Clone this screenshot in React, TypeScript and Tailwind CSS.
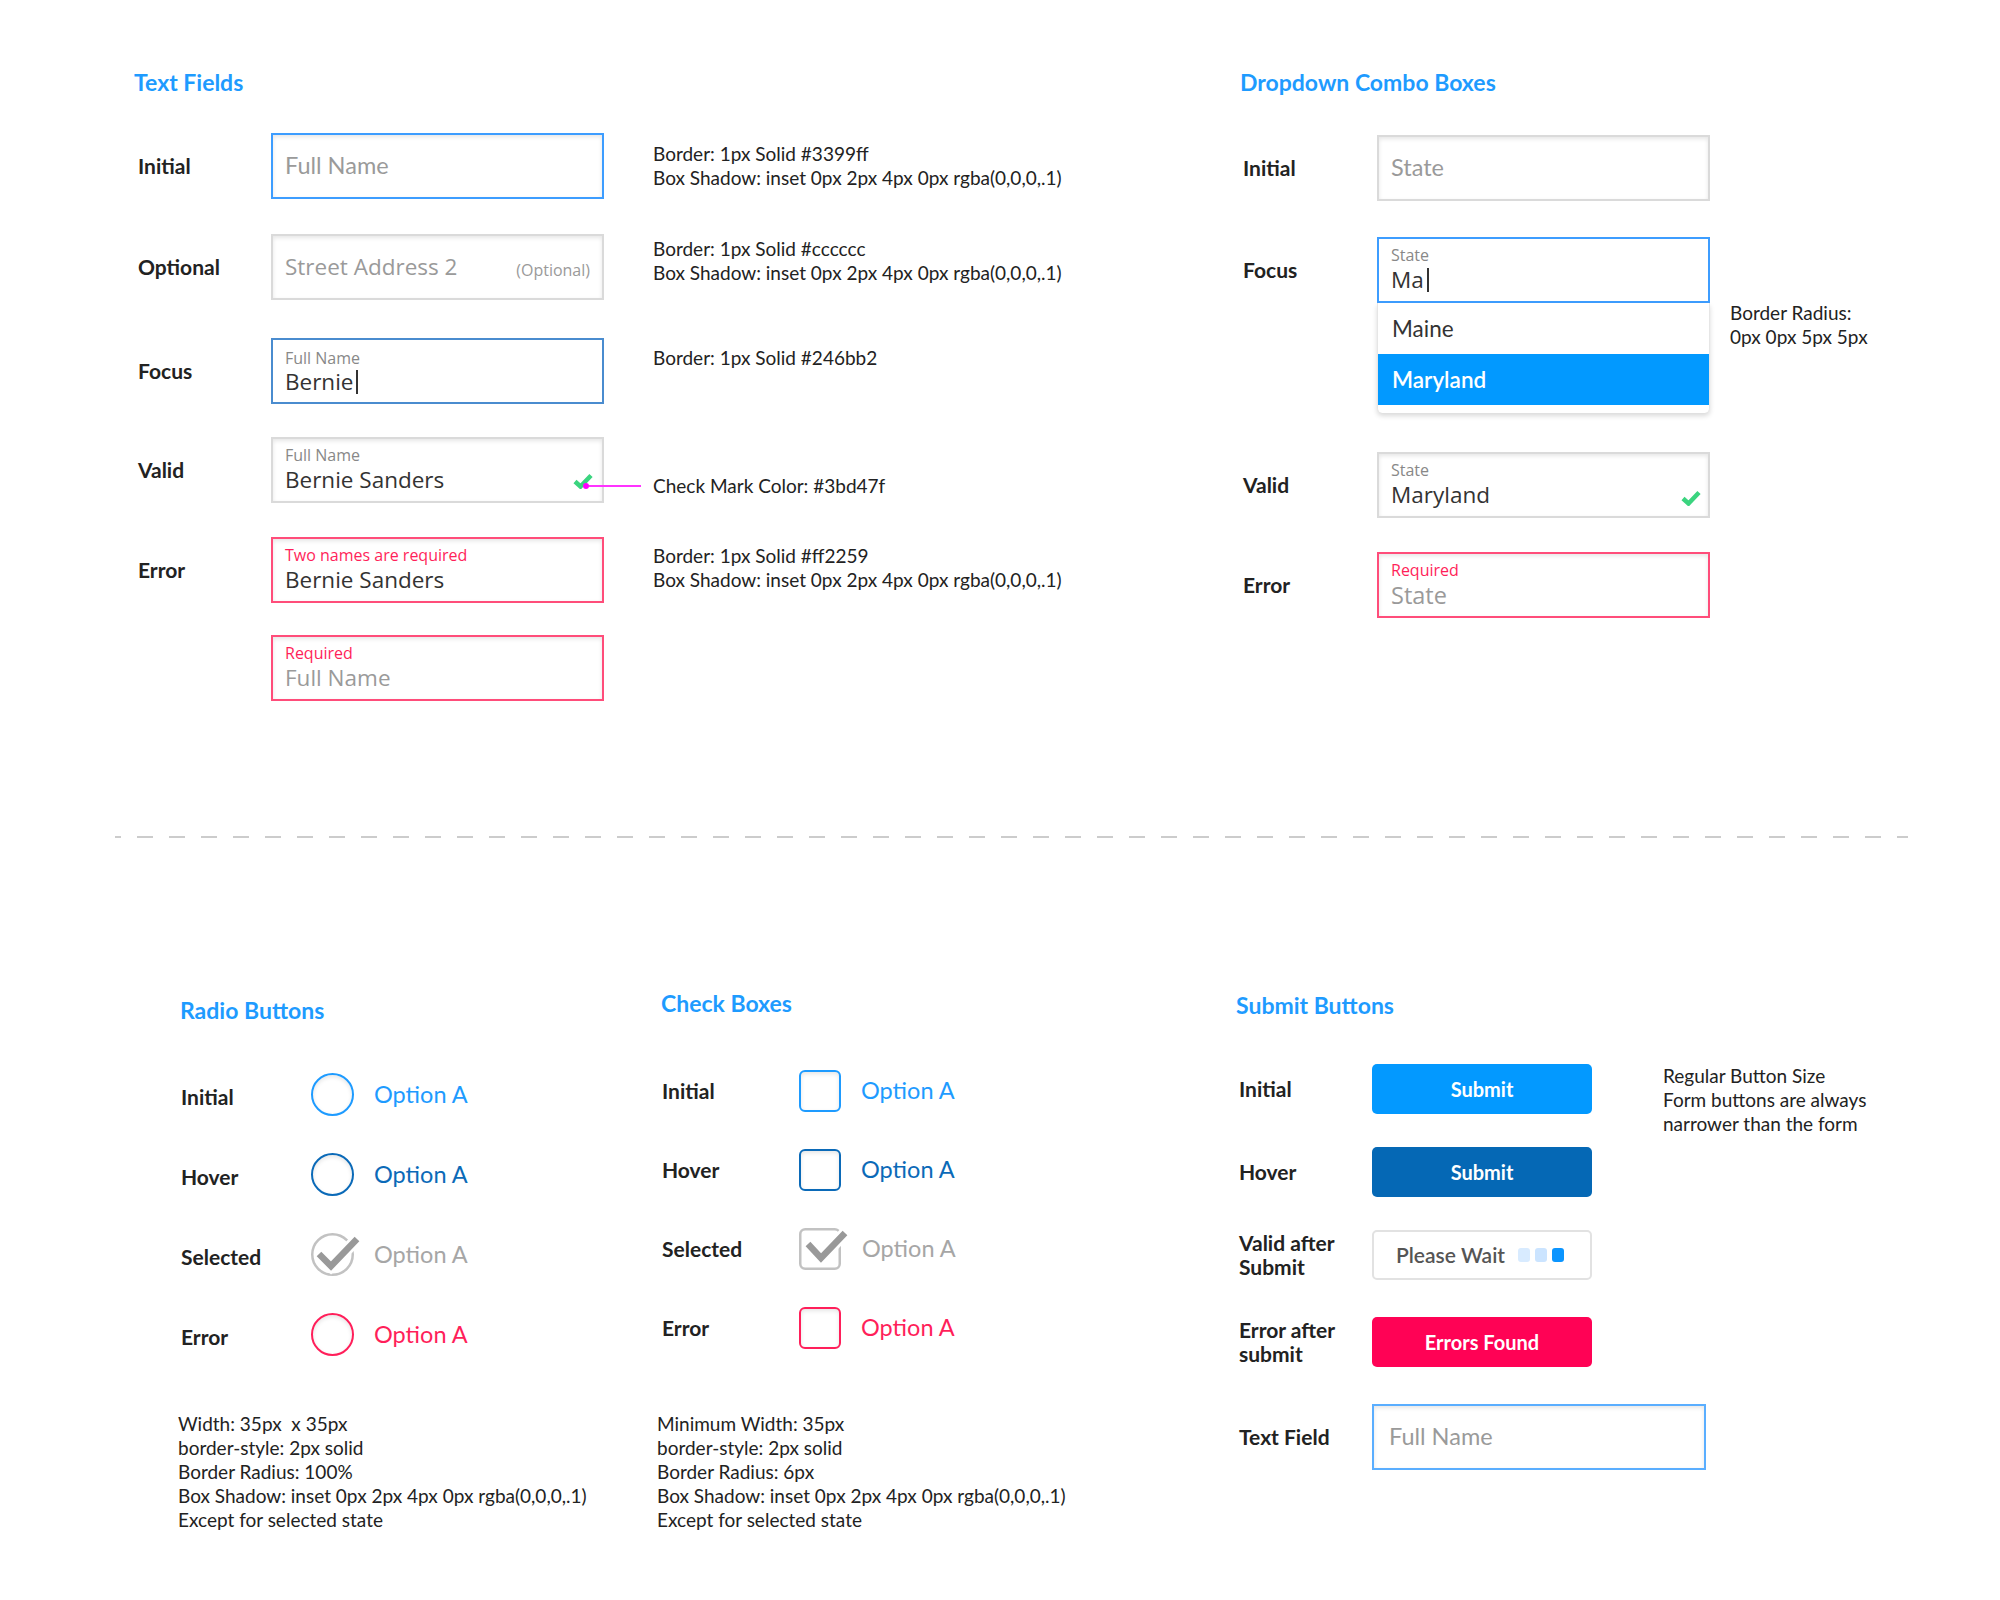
import React from 'react';

const SHADOW = 'shadow-[inset_0_2px_4px_rgba(0,0,0,0.1)]';

function GreenCheck({ className = '' }: { className?: string }) {
    return (
        <svg width="20" height="16" viewBox="0 0 20 16" className={className}>
            <path d="M2 8.5 L7.5 13.5 L18 2.5" fill="none" stroke="#3bd47f" strokeWidth="4.5" />
        </svg>
    );
}

function Cursor() {
    return <span className="ml-[3px] inline-block h-[24px] w-[2px] bg-[#333] align-[-4px]" />;
}

function RowLabel({ children, className = 'w-[137px] pl-[4px]' }: { children: React.ReactNode; className?: string }) {
    return <div className={`shrink-0 text-[21px] font-bold leading-[24px] text-[#222] ${className}`}>{children}</div>;
}

function Note({ children, className = '' }: { children: React.ReactNode; className?: string }) {
    return <div className={`text-[19px] leading-[24px] text-[#222] ${className}`}>{children}</div>;
}

function Heading({ children, className = '' }: { children: React.ReactNode; className?: string }) {
    return <h2 className={`text-[23px] font-bold leading-[30px] text-[#1e9bff] ${className}`}>{children}</h2>;
}

function Placeholder({ text }: { text: string }) {
    return <div className="flex h-full items-center pl-[12px] text-[23.5px] text-[#9a9a9a]">{text}</div>;
}

function TextFields() {
    return (
        <section className="w-[1106px] shrink-0">
            <Heading>Text Fields</Heading>

            {/* Initial */}
            <div className="mt-[36px] flex items-center">
                <RowLabel>Initial</RowLabel>
                <div className={`h-[66px] w-[333px] shrink-0 border-2 border-[#3d9dff] bg-white ${SHADOW}`}>
                    <Placeholder text="Full Name" />
                </div>
                <Note className="ml-[49px]">
                    Border: 1px Solid #3399ff
                    <br />
                    Box Shadow: inset 0px 2px 4px 0px rgba(0,0,0,.1)
                </Note>
            </div>

            {/* Optional */}
            <div className="mt-[35px] flex items-center">
                <RowLabel>Optional</RowLabel>
                <div className={`flex h-[66px] w-[333px] shrink-0 items-center justify-between border-2 border-[#dadada] bg-white pl-[12px] pr-[12px] ${SHADOW}`}>
                    <span className="text-[22.5px] text-[#9a9a9a]">Street Address 2</span>
                    <span className="mt-[6px] text-[16px] text-[#9a9a9a]">(Optional)</span>
                </div>
                <Note className="mb-[13px] ml-[49px]">
                    Border: 1px Solid #cccccc
                    <br />
                    Box Shadow: inset 0px 2px 4px 0px rgba(0,0,0,.1)
                </Note>
            </div>

            {/* Focus */}
            <div className="mt-[38px] flex items-center">
                <RowLabel>Focus</RowLabel>
                <div className="flex h-[66px] w-[333px] shrink-0 flex-col border-2 border-[#4a8ccf] bg-white pl-[12px] pt-[8px]">
                    <span className="text-[16px] leading-[20px] text-[#888]">Full Name</span>
                    <span className="text-[22.5px] leading-[28px] text-[#333]">
                        Bernie
                        <Cursor />
                    </span>
                </div>
                <Note className="mb-[26px] ml-[49px]">Border: 1px Solid #246bb2</Note>
            </div>

            {/* Valid */}
            <div className="mt-[33px] flex items-center">
                <RowLabel>Valid</RowLabel>
                <div className={`flex h-[66px] w-[333px] shrink-0 flex-col border-2 border-[#dadada] bg-white pl-[12px] pt-[6px] ${SHADOW}`}>
                    <span className="text-[16px] leading-[20px] text-[#888]">Full Name</span>
                    <div className="flex items-center justify-between pr-[9px]">
                        <span className="text-[22.5px] leading-[30px] text-[#333]">Bernie Sanders</span>
                        <GreenCheck className="mt-[2px]" />
                    </div>
                </div>
                <div className="relative -ml-[18px] mt-[32px] flex items-center">
                    <span className="-ml-[3px] h-[6px] w-[6px] rounded-full bg-[#ff00ff]" />
                    <span className="h-[2px] w-[52px] bg-[#ff33ff]" />
                    <Note className="ml-[12px]">Check Mark Color: #3bd47f</Note>
                </div>
            </div>

            {/* Error */}
            <div className="mt-[34px] flex items-center">
                <RowLabel>Error</RowLabel>
                <div className={`flex h-[66px] w-[333px] shrink-0 flex-col border-2 border-[#ff4d7a] bg-white pl-[12px] pt-[6px] ${SHADOW}`}>
                    <span className="text-[16px] leading-[20px] text-[#ff1f5a]">Two names are required</span>
                    <span className="text-[22.5px] leading-[30px] text-[#333]">Bernie Sanders</span>
                </div>
                <Note className="mb-[4px] ml-[49px]">
                    Border: 1px Solid #ff2259
                    <br />
                    Box Shadow: inset 0px 2px 4px 0px rgba(0,0,0,.1)
                </Note>
            </div>

            {/* Error, empty */}
            <div className="mt-[32px] flex items-center">
                <RowLabel> </RowLabel>
                <div className={`flex h-[66px] w-[333px] shrink-0 flex-col border-2 border-[#ff4d7a] bg-white pl-[12px] pt-[6px] ${SHADOW}`}>
                    <span className="text-[16px] leading-[20px] text-[#ff1f5a]">Required</span>
                    <span className="text-[22.5px] leading-[30px] text-[#9a9a9a]">Full Name</span>
                </div>
            </div>
        </section>
    );
}

function Dropdowns() {
    return (
        <section className="shrink-0">
            <Heading>Dropdown Combo Boxes</Heading>

            <div className="mt-[38px] flex items-center">
                <RowLabel className="w-[137px] pl-[3px]">Initial</RowLabel>
                <div className={`h-[66px] w-[333px] shrink-0 border-2 border-[#dadada] bg-white ${SHADOW}`}>
                    <Placeholder text="State" />
                </div>
            </div>

            <div className="mt-[36px] flex items-start">
                <div className="flex h-[66px] items-center">
                    <RowLabel className="w-[137px] pl-[3px]">Focus</RowLabel>
                </div>
                <div className="w-[333px] shrink-0">
                    <div className="flex h-[66px] flex-col border-2 border-[#3d9dff] bg-white pl-[12px] pt-[6px]">
                        <span className="text-[16px] leading-[20px] text-[#888]">State</span>
                        <span className="text-[22.5px] leading-[30px] text-[#333]">
                            Ma
                            <Cursor />
                        </span>
                    </div>
                    <div className="rounded-b-[5px] border-x border-[#e6e6e6] bg-white pb-[8px] shadow-[0_3px_5px_rgba(0,0,0,0.15)]">
                        <div className="flex h-[51px] items-center pl-[14px] text-[22.5px] text-[#333]">Maine</div>
                        <div className="flex h-[51px] items-center bg-[#0299ff] pl-[14px] text-[22.5px] font-semibold text-white">
                            Maryland
                        </div>
                    </div>
                </div>
                <Note className="ml-[20px] mt-[64px]">
                    Border Radius:
                    <br />
                    0px 0px 5px 5px
                </Note>
            </div>

            <div className="mt-[39px] flex items-center">
                <RowLabel className="w-[137px] pl-[3px]">Valid</RowLabel>
                <div className={`flex h-[66px] w-[333px] shrink-0 flex-col border-2 border-[#dadada] bg-white pl-[12px] pt-[6px] ${SHADOW}`}>
                    <span className="text-[16px] leading-[20px] text-[#888]">State</span>
                    <div className="flex items-center justify-between pr-[7px]">
                        <span className="text-[22.5px] leading-[30px] text-[#333]">Maryland</span>
                        <GreenCheck className="mt-[6px]" />
                    </div>
                </div>
            </div>

            <div className="mt-[34px] flex items-center">
                <RowLabel className="w-[137px] pl-[3px]">Error</RowLabel>
                <div className={`flex h-[66px] w-[333px] shrink-0 flex-col border-2 border-[#ff4d7a] bg-white pl-[12px] pt-[6px] ${SHADOW}`}>
                    <span className="text-[16px] leading-[20px] text-[#ff1f5a]">Required</span>
                    <span className="text-[23.5px] leading-[30px] text-[#9a9a9a]">State</span>
                </div>
            </div>
        </section>
    );
}

function SelectedCheck({ round }: { round: boolean }) {
    return (
        <svg width="43" height="43" viewBox="0 0 43 43" overflow="visible" className="shrink-0">
            {round ? (
                <circle cx="21.5" cy="21.5" r="20.25" fill="none" stroke="#c2c2c2" strokeWidth="2.5" />
            ) : (
                <rect x="1.25" y="1.25" width="39.5" height="39.5" rx="5" fill="none" stroke="#c2c2c2" strokeWidth="2.5" />
            )}
            <path
                d={round ? 'M8 21 L20 33 L46 6' : 'M9 16 L22 30 L46 5'}
                fill="none"
                stroke="#ffffff"
                strokeWidth="12"
            />
            <path
                d={round ? 'M8 21 L20 33 L46 6' : 'M9 16 L22 30 L46 5'}
                fill="none"
                stroke="#999999"
                strokeWidth="6.5"
            />
        </svg>
    );
}

const OPTION_ROWS = [
    { label: 'Initial', border: 'border-[#1e9bff]', text: 'text-[#1e9bff]' },
    { label: 'Hover', border: 'border-[#0b6ab8]', text: 'text-[#0b6ab8]' },
    { label: 'Selected', border: '', text: 'text-[#a6a6a6]' },
    { label: 'Error', border: 'border-[#ff1f5a]', text: 'text-[#ff1f5a]' },
];

function RadioButtons() {
    return (
        <section className="w-[479px] shrink-0 pt-[157px]">
            <Heading>Radio Buttons</Heading>
            <div className="mt-[48px] flex flex-col gap-[37px]">
                {OPTION_ROWS.map((row) => (
                    <div key={row.label} className="flex h-[43px] items-center">
                        <RowLabel className="mt-[4px] w-[131px] pl-[1px]">{row.label}</RowLabel>
                        {row.label === 'Selected' ? (
                            <SelectedCheck round />
                        ) : (
                            <div className={`h-[43px] w-[43px] shrink-0 rounded-full border-[2.5px] bg-white ${row.border} ${SHADOW}`} />
                        )}
                        <span className={`ml-[20px] text-[23.5px] ${row.text}`}>Option A</span>
                    </div>
                ))}
            </div>
            <Note className="-ml-[2px] mt-[56px]">
                Width: 35px&nbsp; x 35px
                <br />
                border-style: 2px solid
                <br />
                Border Radius: 100%
                <br />
                Box Shadow: inset 0px 2px 4px 0px rgba(0,0,0,.1)
                <br />
                Except for selected state
            </Note>
        </section>
    );
}

function CheckBoxes() {
    return (
        <section className="w-[577px] shrink-0 pt-[150px]">
            <Heading className="ml-[2px]">Check Boxes</Heading>
            <div className="mt-[52px] flex flex-col gap-[37px]">
                {OPTION_ROWS.map((row) => (
                    <div key={row.label} className="flex h-[42px] items-center">
                        <RowLabel className="w-[140px] pl-[3px]">{row.label}</RowLabel>
                        {row.label === 'Selected' ? (
                            <SelectedCheck round={false} />
                        ) : (
                            <div className={`h-[42px] w-[42px] shrink-0 rounded-[6px] border-[2.5px] bg-white ${row.border} ${SHADOW}`} />
                        )}
                        <span className={`ml-[20px] text-[23.5px] ${row.text}`}>Option A</span>
                    </div>
                ))}
            </div>
            <Note className="-ml-[2px] mt-[63px]">
                Minimum Width: 35px
                <br />
                border-style: 2px solid
                <br />
                Border Radius: 6px
                <br />
                Box Shadow: inset 0px 2px 4px 0px rgba(0,0,0,.1)
                <br />
                Except for selected state
            </Note>
        </section>
    );
}

function SubmitButtons() {
    const label = 'w-[136px] pl-[3px]';
    const button = 'flex h-[50px] w-[220px] shrink-0 items-center justify-center rounded-[5px] text-[20px] font-bold text-white';
    return (
        <section className="shrink-0 pt-[152px]">
            <Heading>Submit Buttons</Heading>

            <div className="mt-[44px] flex h-[50px] items-start">
                <div className="flex h-[50px] items-center">
                    <RowLabel className={label}>Initial</RowLabel>
                </div>
                <div className={`${button} bg-[#0399ff]`}>Submit</div>
                <Note className="ml-[71px] shrink-0">
                    Regular Button Size
                    <br />
                    Form buttons are always
                    <br />
                    narrower than the form
                </Note>
            </div>

            <div className="mt-[33px] flex items-center">
                <RowLabel className={label}>Hover</RowLabel>
                <div className={`${button} bg-[#0568b5]`}>Submit</div>
            </div>

            <div className="mt-[33px] flex items-center">
                <RowLabel className={label}>
                    Valid after
                    <br />
                    Submit
                </RowLabel>
                <div className="flex h-[50px] w-[220px] shrink-0 items-center rounded-[5px] border-2 border-[#e2e2e2] bg-white pl-[22px]">
                    <span className="text-[21px] font-semibold text-[#555]">Please Wait</span>
                    <div className="ml-[13px] flex gap-[5px]">
                        <span className="h-[14px] w-[12px] rounded-[3px] bg-[#d8ebff]" />
                        <span className="h-[14px] w-[12px] rounded-[3px] bg-[#cbe4ff]" />
                        <span className="h-[14px] w-[12px] rounded-[3px] bg-[#0b95ff]" />
                    </div>
                </div>
            </div>

            <div className="mt-[37px] flex items-center">
                <RowLabel className={label}>
                    Error after
                    <br />
                    submit
                </RowLabel>
                <div className={`${button} bg-[#ff0255]`}>Errors Found</div>
            </div>

            <div className="mt-[37px] flex items-center">
                <RowLabel className={label}>Text Field</RowLabel>
                <div className={`h-[66px] w-[334px] shrink-0 border-2 border-[#5aaeff] bg-white ${SHADOW}`}>
                    <div className="flex h-full items-center pl-[15px] text-[23.5px] text-[#9a9a9a]">Full Name</div>
                </div>
            </div>
        </section>
    );
}

export default function App() {
    return (
        <div className="h-[1600px] w-[2000px] overflow-hidden bg-white font-['Lato',sans-serif] text-[#222]">
            <div className="flex pl-[134px] pt-[67px] font-['Lato',sans-serif] [&_span]:font-['Open_Sans',sans-serif]">
                <TextFields />
                <Dropdowns />
            </div>

            <div className="mt-[135px] pl-[115px]">
                <svg width="1793" height="2" className="block">
                    <line x1="0" y1="1" x2="1793" y2="1" stroke="#cccccc" strokeWidth="2" strokeDasharray="16 16" strokeDashoffset="10" />
                </svg>
            </div>

            <div className="flex items-start pl-[180px]">
                <RadioButtons />
                <CheckBoxes />
                <SubmitButtons />
            </div>
        </div>
    );
}
